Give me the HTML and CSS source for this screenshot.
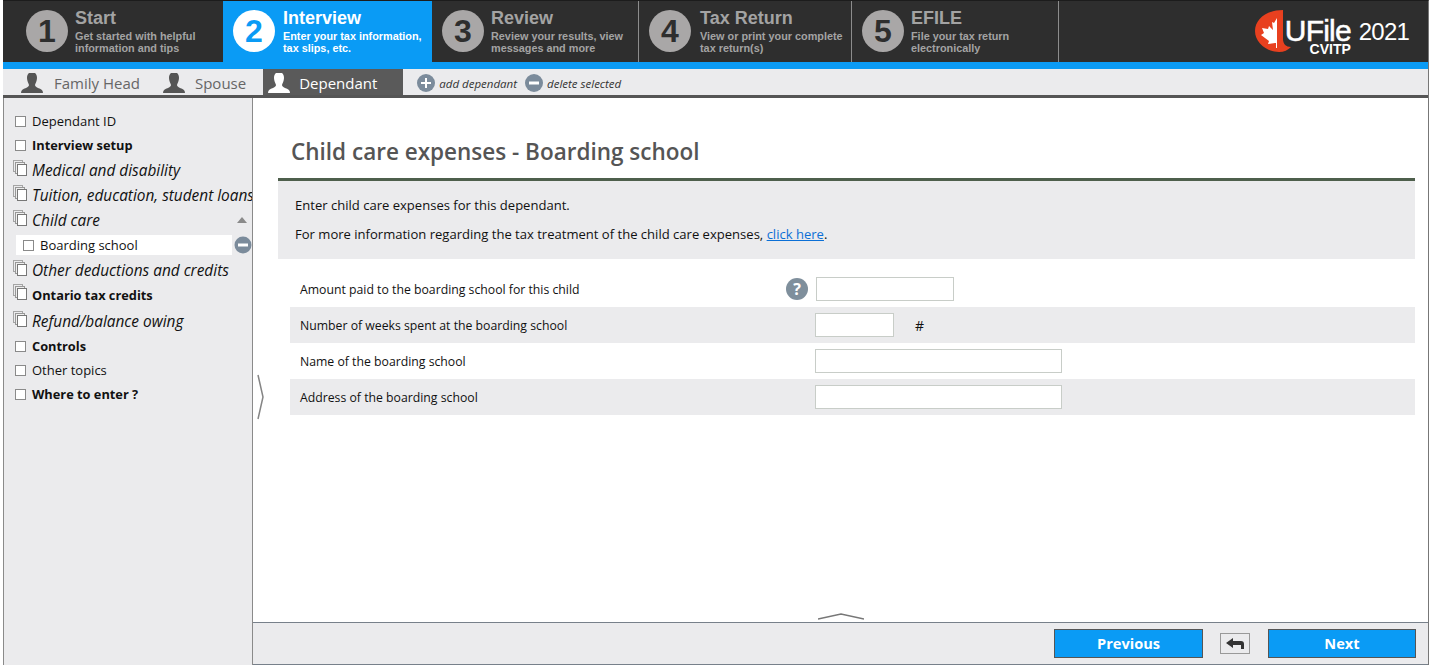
FILE: index.html
```html
<!DOCTYPE html>
<html lang="en">
<head>
    <meta charset="UTF-8">
    <title>UFile 2021 - Child care expenses</title>
    <link rel="stylesheet" href="styles.css">
</head>
<body>
    <svg class="defs" width="0" height="0">
        <symbol id="person" viewBox="0 0 22 20">
            <path d="M8 0h6c1.500 1 2 3 2 5 0 3-1.500 5-2 7 0 1 1 2 3 3 3 1 5 2 5 5H0c0-3 2-4 5-5 2-1 3-2 3-3-.5-2-2-4-2-7 0-2 .5-4 2-5z"/>
        </symbol>
        <symbol id="single" viewBox="0 0 15 16">
            <rect x="1.500" y="3.500" width="10" height="10" fill="#fff" stroke="#8a8a8a"/>
        </symbol>
        <symbol id="stack" viewBox="0 0 15 16">
            <rect x=".5" y=".5" width="9" height="11" fill="none" stroke="#a5a5a5"/>
            <rect x="2.500" y="2.500" width="9" height="11" fill="#eee" stroke="#989898"/>
            <rect x="4.500" y="4.500" width="9" height="11" fill="#fff" stroke="#777"/>
        </symbol>
    </svg>

    <div class="app">
        <header class="steps">
            <div class="step step-1">
                <span class="num">1</span>
                <div><h3>Start</h3><p>Get started with helpful<br>information and tips</p></div>
            </div>
            <div class="step step-2 active">
                <span class="num">2</span>
                <div><h3>Interview</h3><p>Enter your tax information,<br>tax slips, etc.</p></div>
            </div>
            <div class="step step-3">
                <span class="num">3</span>
                <div><h3>Review</h3><p>Review your results, view<br>messages and more</p></div>
            </div>
            <div class="step step-4">
                <span class="num">4</span>
                <div><h3>Tax Return</h3><p>View or print your complete<br>tax return(s)</p></div>
            </div>
            <div class="step step-5">
                <span class="num">5</span>
                <div><h3>EFILE</h3><p>File your tax return<br>electronically</p></div>
            </div>
            <div class="logo">
                <svg class="leaf" viewBox="0 0 38 42" width="38" height="42">
                    <path fill="#e8401f" d="M28 0C12 0 0 9 0 21s12 21 24 21c5 0 9-2 12-5-5 0-8-3-8-8z"/>
                    <path fill="#fff" d="M22 8l-3 5-2-1 1 8-4-4-1 3-6-1 2 5-3 2 8 6-1 3 7-1h1v5h1z"/>
                </svg>
                <div class="logo-name">
                    <span class="ufile">UFile</span>
                    <span class="cvitp">CVITP</span>
                </div>
                <span class="year">2021</span>
            </div>
        </header>

        <nav class="people">
            <a class="person"><svg class="person-icon"><use href="#person"/></svg>Family Head</a>
            <a class="person spouse"><svg class="person-icon"><use href="#person"/></svg>Spouse</a>
            <a class="person current"><svg class="person-icon"><use href="#person"/></svg>Dependant</a>
            <a class="person-action">
                <svg viewBox="0 0 18 18" width="18" height="18"><circle cx="9" cy="9" r="9" fill="#7b8b9b"/><path d="M4 9h10M9 4v10" stroke="#fff" stroke-width="2"/></svg>
                add dependant
            </a>
            <a class="person-action">
                <svg viewBox="0 0 18 18" width="18" height="18"><circle cx="9" cy="9" r="9" fill="#7b8b9b"/><path d="M4 9h10" stroke="#fff" stroke-width="3"/></svg>
                delete selected
            </a>
        </nav>

        <div class="body-row">
            <aside class="sidebar">
                <ul class="topics">
                    <li class="short"><svg class="ico"><use href="#single"/></svg>Dependant ID</li>
                    <li class="bold lift"><svg class="ico"><use href="#single"/></svg>Interview setup</li>
                    <li class="group"><svg class="ico stack"><use href="#stack"/></svg>Medical and disability</li>
                    <li class="group"><svg class="ico stack"><use href="#stack"/></svg>Tuition, education, student loans</li>
                    <li class="group"><svg class="ico stack"><use href="#stack"/></svg>Child care<span class="arrow-up"></span></li>
                    <li class="sub lift">
                        <div class="sub-box"><svg class="ico"><use href="#single"/></svg>Boarding school</div>
                        <svg class="sub-del" viewBox="0 0 18 18" width="18" height="18"><circle cx="9" cy="9" r="8.500" fill="#7b8b9b"/><path d="M4 9h10" stroke="#fff" stroke-width="3"/></svg>
                    </li>
                    <li class="group"><svg class="ico stack"><use href="#stack"/></svg>Other deductions and credits</li>
                    <li class="bold lift"><svg class="ico stack"><use href="#stack"/></svg>Ontario tax credits</li>
                    <li class="group tall"><svg class="ico stack"><use href="#stack"/></svg>Refund/balance owing</li>
                    <li class="bold short"><svg class="ico"><use href="#single"/></svg>Controls</li>
                    <li class="short"><svg class="ico"><use href="#single"/></svg>Other topics</li>
                    <li class="bold short"><svg class="ico"><use href="#single"/></svg>Where to enter ?</li>
                </ul>
            </aside>

            <main class="main">
                <svg class="handle-side" viewBox="0 0 8 46" width="8" height="46"><path d="M1 1l5 22-5 22" fill="none" stroke="#858585" stroke-width="1.500"/></svg>
                <div class="content">
                    <h1>Child care expenses - Boarding school</h1>
                    <div class="info">
                        <p>Enter child care expenses for this dependant.</p>
                        <p>For more information regarding the tax treatment of the child care expenses, <a href="#">click here</a>.</p>
                    </div>
                    <div class="form">
                        <div class="row">
                            <label>Amount paid to the boarding school for this child</label>
                            <span class="help">?</span>
                            <input class="amount" type="text">
                        </div>
                        <div class="row shade">
                            <label>Number of weeks spent at the boarding school</label>
                            <input class="weeks" type="text">
                            <span class="unit">#</span>
                        </div>
                        <div class="row">
                            <label>Name of the boarding school</label>
                            <input class="wide" type="text">
                        </div>
                        <div class="row shade">
                            <label>Address of the boarding school</label>
                            <input class="wide" type="text">
                        </div>
                    </div>
                </div>
                <svg class="handle-bottom" viewBox="0 0 46 8" width="46" height="8"><path d="M0 6l23-5 23 5" fill="none" stroke="#777" stroke-width="1.500"/></svg>
                <footer class="footer">
                    <button class="btn btn-prev">Previous</button>
                    <button class="back">
                        <svg viewBox="0 0 18 12" width="18" height="12"><path d="M0 5l7-5v3h8c2 0 3 1 3 3v5h-3V7H7v3z" fill="#333"/></svg>
                    </button>
                    <button class="btn btn-next">Next</button>
                </footer>
            </main>
        </div>
    </div>
</body>
</html>
```

FILE: styles.css
```css
* {
    box-sizing: border-box;
}

body {
    margin: 0;
    height: 665px;
    overflow: hidden;
    background: #ffffff;
    font-family: "Open Sans", "Noto Sans", sans-serif;
    color: #111111;
}

.defs {
    display: block;
    height: 0;
}

.app {
    display: flex;
    flex-direction: column;
    height: 665px;
    margin-left: 3px;
    margin-right: 4px;
    border-top: 1px solid #1c1c1c;
    border-right: 1px solid #777777;
}

/* top steps */
.steps {
    display: flex;
    height: 68px;
    background: #2e2e2e;
    border-bottom: 7px solid #0a9bf5;
}

.step {
    display: flex;
    padding-top: 9px;
    border-right: 1px solid #8c8c8c;
    font-family: "Liberation Sans", Arial, sans-serif;
    font-weight: bold;
    color: #a3a3a3;
}

.step-1 { width: 220px; padding-left: 23px; border-right: none; }
.step-2 { width: 209px; padding-left: 10px; border-right: none; }
.step-3 { width: 207px; padding-left: 10px; }
.step-4 { width: 213px; padding-left: 10px; }
.step-5 { width: 207px; padding-left: 10px; }

.step.active {
    background: #0a9bf5;
    color: #ffffff;
}

.num {
    flex: none;
    width: 42px;
    height: 42px;
    margin-right: 7px;
    border-radius: 50%;
    background: #a9a7a7;
    color: #2e2e2e;
    font-size: 32px;
    line-height: 42px;
    text-align: center;
}

.active .num {
    background: #ffffff;
    color: #0a9bf5;
    margin-right: 8px;
}

.step-4 .num {
    margin-right: 9px;
}

.step h3 {
    margin: -1px 0 0;
    font-size: 18px;
    line-height: 18px;
}

.step p {
    margin: 3px 0 0;
    font-size: 10.850px;
    line-height: 12px;
}

.logo {
    display: flex;
    flex: 1;
    justify-content: flex-end;
    padding: 9px 19px 0 0;
    color: #ffffff;
    font-family: "Liberation Sans", Arial, sans-serif;
}

.leaf {
    margin-right: -8px;
    position: relative;
}

.logo-name {
    display: flex;
    flex-direction: column;
    align-items: flex-end;
    margin-right: 8px;
    position: relative;
}

.ufile {
    margin-top: 7px;
    font-size: 30px;
    line-height: 27px;
    letter-spacing: -.8px;
    -webkit-text-stroke: .5px #ffffff;
}

.cvitp {
    font-size: 14px;
    font-weight: bold;
    line-height: 10px;
}

.year {
    font-size: 24px;
    line-height: 44px;
    letter-spacing: -.8px;
}

/* dependant tabs */
.people {
    display: flex;
    align-items: stretch;
    flex: none;
    height: 29px;
    background: #ebebed;
    border-bottom: 3px solid #555555;
    color: #666666;
    font-size: 15px;
}

.person {
    display: flex;
    align-items: center;
    padding-left: 18px;
    padding-right: 7px;
    padding-top: 2px;
    white-space: nowrap;
}

.person-icon {
    width: 22px;
    height: 20px;
    margin-right: 11px;
    fill: #555555;
}

.person.spouse {
    padding-left: 16px;
    padding-right: 17px;
}

.spouse .person-icon {
    margin-right: 10px;
}

.person.current {
    background: #5a5a5a;
    color: #ffffff;
    padding-left: 5px;
    padding-right: 26px;
}

.current .person-icon {
    fill: #ffffff;
    margin-right: 9px;
}

.person-action {
    display: flex;
    align-items: center;
    gap: 4px;
    margin-left: 14px;
    padding-top: 2px;
    color: #333333;
    font-size: 11.500px;
    font-style: italic;
    white-space: nowrap;
}

.person-action + .person-action {
    margin-left: 8px;
}

.body-row {
    display: flex;
    flex: 1;
    min-height: 0;
}

/* left menu */
.sidebar {
    flex: none;
    width: 250px;
    background: #ebebed;
    border-left: 1px solid #8a8a8a;
    border-right: 1px solid #8a8a8a;
    overflow: hidden;
}

.topics {
    list-style: none;
    margin: 0;
    padding: 11px 0 0 10px;
    font-size: 13px;
}

.topics li {
    display: flex;
    align-items: center;
    height: 25px;
    white-space: nowrap;
    position: relative;
}

.topics li.short {
    height: 24px;
}

.topics li.lift {
    padding-bottom: 2px;
}

.topics li.bold {
    font-size: 12.800px;
    font-weight: 700;
}

.topics li.group {
    font-size: 15.400px;
    font-style: italic;
}

.topics li.tall {
    margin-top: 1px;
}

.ico {
    flex: none;
    width: 15px;
    height: 16px;
    margin-right: 3px;
}

.ico.stack {
    margin-left: -1px;
    margin-right: 4px;
    margin-top: -5px;
}

.arrow-up {
    position: absolute;
    right: 5px;
    top: 9px;
    border-left: 5px solid transparent;
    border-right: 5px solid transparent;
    border-bottom: 6px solid #8a8a8a;
}

.sub-box {
    display: flex;
    align-items: center;
    width: 216px;
    height: 20px;
    margin-left: 2px;
    padding-left: 6px;
    background: #ffffff;
}

.sub-box .ico {
    margin-right: 3px;
}

.sub-del {
    margin-left: 2px;
}

/* main panel */
.main {
    position: relative;
    flex: 1;
    display: flex;
    flex-direction: column;
    min-width: 0;
    background: #ffffff;
}

.content {
    flex: 1;
    padding: 36px 13px 0 25px;
}

.content h1 {
    margin: 0;
    padding: 1px 0 0 13px;
    height: 47px;
    border-bottom: 3px solid #4e5f4c;
    font-size: 22.500px;
    font-weight: 600;
    line-height: 33px;
    color: #555555;
}

.info {
    height: 78px;
    padding: 15px 17px 0;
    background: #ebebed;
    font-size: 13.050px;
}

.info p {
    margin: 0 0 11px;
    line-height: 18px;
}

.info a {
    color: #0b6fd6;
}

.form {
    margin-top: 12px;
    margin-left: 12px;
}

.row {
    display: flex;
    align-items: center;
    height: 36px;
    padding-left: 10px;
    font-size: 12.250px;
}

.row.shade {
    background: #ebebed;
}

.row label {
    width: 515px;
    flex: none;
}

.help {
    width: 22px;
    height: 22px;
    margin-left: -29px;
    margin-right: 7px;
    border-radius: 50%;
    background: #7f8f9c;
    color: #ffffff;
    font-size: 16px;
    font-weight: 700;
    line-height: 22px;
    text-align: center;
}

.row input {
    height: 24px;
    border: 1px solid #c8cdc8;
    background: #ffffff;
    padding: 0;
}

.amount {
    width: 138px;
    margin-left: 1px;
}

.weeks {
    width: 79px;
}

.wide {
    width: 247px;
}

.unit {
    margin-left: 21px;
    font-size: 14px;
}

.handle-side {
    position: absolute;
    left: 4px;
    top: 276px;
}

.handle-bottom {
    position: absolute;
    left: 565px;
    bottom: 44px;
}

/* bottom bar */
.footer {
    display: flex;
    align-items: center;
    flex: none;
    height: 43px;
    padding-left: 801px;
    padding-right: 12px;
    background: #ebebed;
    border-top: 1px solid #77808a;
    border-bottom: 1px solid #77808a;
}

.btn {
    height: 29px;
    padding: 0 0 2px;
    border: 1px solid #555555;
    background: #0a9bf5;
    color: #ffffff;
    font-family: "Open Sans", "Noto Sans", sans-serif;
    font-size: 14.600px;
    font-weight: 700;
}

.btn-prev {
    width: 149px;
}

.btn-next {
    width: 148px;
}

.back {
    display: flex;
    align-items: center;
    justify-content: center;
    width: 30px;
    height: 21px;
    margin: 0 18px 0 17px;
    border: 1px solid #999999;
    background: #ebebed;
    padding: 0;
}
```
